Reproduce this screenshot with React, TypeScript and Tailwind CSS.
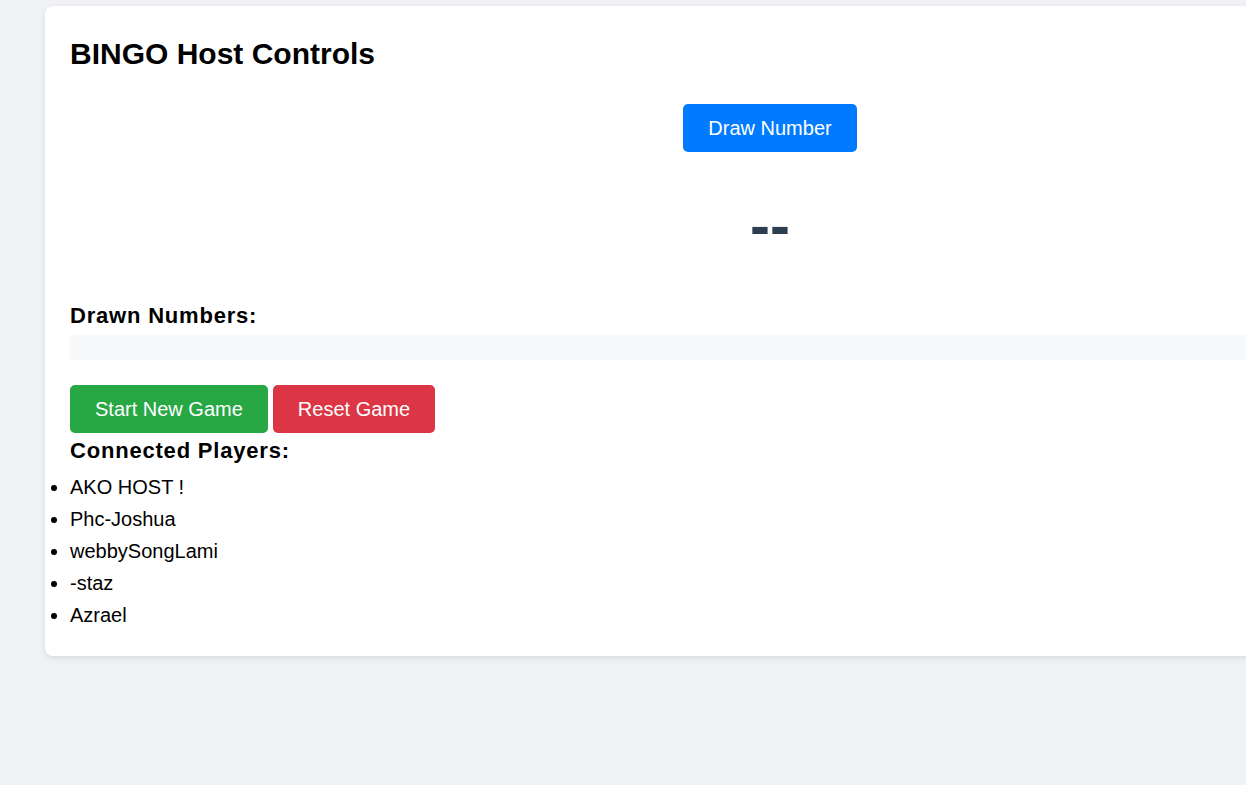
import { useState } from 'react';

const players = ['AKO HOST !', 'Phc-Joshua', 'webbySongLami', '-staz', 'Azrael'];

export default function App() {
  const [current] = useState<number | null>(null);
  const [drawn] = useState<number[]>([]);

  return (
    <div className="h-screen overflow-hidden bg-[#f0f2f5]" style={{ fontFamily: '"Liberation Sans", Arial, sans-serif' }}>
      <div className="ml-[45px] mt-[6px] w-[1450px] rounded-lg bg-white p-[25px] shadow-[0_2px_6px_rgba(0,0,0,0.1)]">
        <h1 className="mt-[6px] text-[30px] font-bold leading-[34px] text-black">BINGO Host Controls</h1>

        <div className="mt-[33px] flex justify-center">
          <button className="h-12 rounded-[5px] bg-[#007bff] px-[25px] text-[20px] leading-6 text-white">Draw Number</button>
        </div>

        <div className="mt-[44px] text-center text-[60px] font-bold leading-[60px] text-[#2c3e50]">
          {current ?? '--'}
        </div>

        <h3 className="mt-[47px] text-[22px] font-bold leading-[25px] tracking-[0.8px] text-black">Drawn Numbers:</h3>
        <div className="mt-[7px] flex min-h-[25px] flex-wrap gap-1 bg-[#f8f9fa]">
          {drawn.map(n => (
            <span key={n} className="px-2 text-sm">{n}</span>
          ))}
        </div>

        <div className="mt-[25px] flex gap-[5px]">
          <button className="h-12 rounded-[5px] bg-[#28a745] px-[25px] text-[20px] leading-6 text-white">Start New Game</button>
          <button className="h-12 rounded-[5px] bg-[#dc3545] px-[25px] text-[20px] leading-6 text-white">Reset Game</button>
        </div>

        <h3 className="mt-[5px] text-[22px] font-bold leading-[25px] tracking-[0.8px] text-black">Connected Players:</h3>
        <ul className="mt-[8px] list-outside list-disc pl-0">
          {players.map(p => (
            <li key={p} className="text-[20px] leading-8 text-black">{p}</li>
          ))}
        </ul>
      </div>
    </div>
  );
}
